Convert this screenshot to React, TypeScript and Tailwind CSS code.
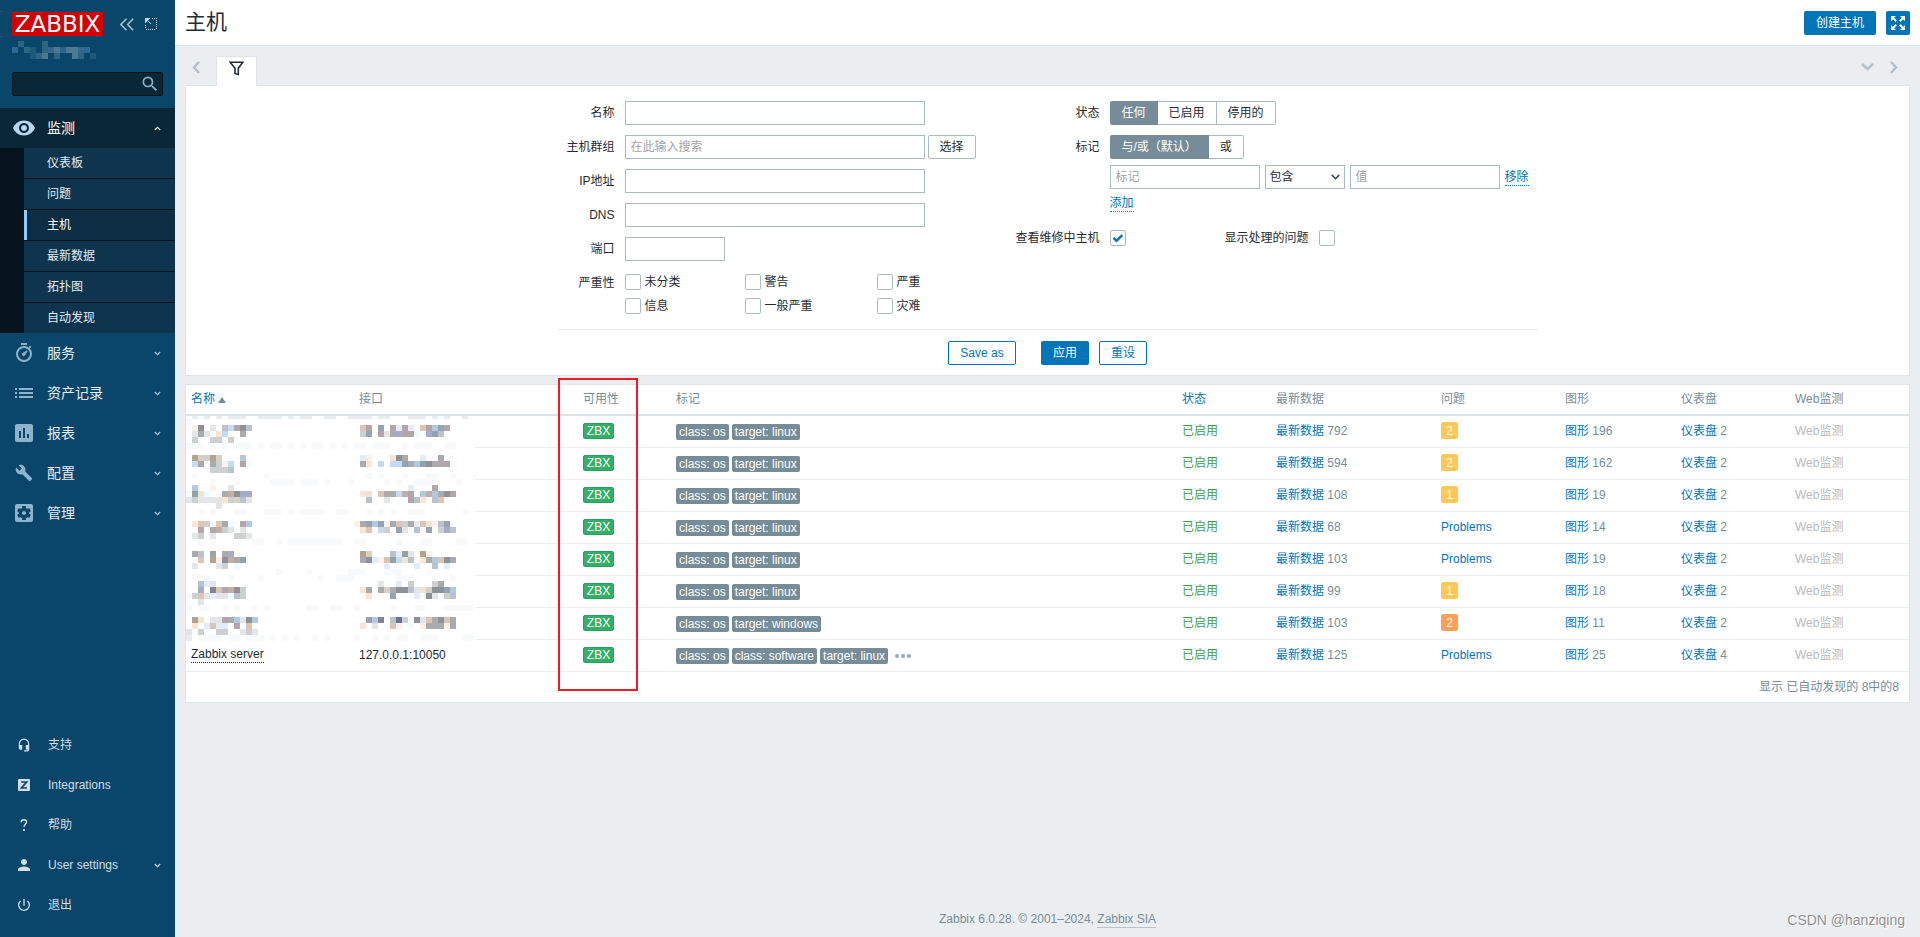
import { useState } from "react";
import type { ReactNode } from "react";
import {
  MdAssessment,
  MdBuild,
  MdHeadsetMic,
  MdPerson,
  MdPowerSettingsNew,
  MdRemoveRedEye,
  MdSearch,
  MdSettingsApplications,
} from "react-icons/md";

// @data: colours used by the pixelated (redacted) areas
const CELL = 6;
const palette: Record<string, string> = {
  f: "#f8f9fb",
  g: "#a9abae",
  d: "#8f9198",
  l: "#e4e5e6",
  s: "#cdd0d1",
  k: "#b5a28c",
  p: "#fcf1ea",
  o: "#fbe4d1",
  t: "#dbc6b6",
  r: "#b3a6aa",
  u: "#c5dbf4",
  v: "#bac2d0",
  i: "#a6abca",
  c: "#e3edf9",
  e: "#98a3b0",
  y: "#ece6d2",
  h: "#d5d1c4",
  m: "#8fa3a8",
  w: "#effcff",
  x: "#c4ada4",
  n: "#7c8793",
  q: "#b0cbe0",
  j: "#6c7099",
  z: "#e9ecef",
  "1": "#2b6a95",
  "2": "#2f6584",
  "3": "#1c5878",
  "4": "#4a7a8f",
  "5": "#37668f",
};

// [grid row, first column, cells]
type MosaicLine = [number, number, string];

const hostMosaic: MosaicLine[] = [
  [0, 1, "z.z.z.zzz..zzzz.z.zz..zz..zzzz.zz...zzz.z.z..z"],
  [1, 0, "f"],
  [2, 1, "pd.l.vurdv"],
  [3, 1, "lgl.ou..g"],
  [4, 1, "s..ss.s"],
  [5, 0, "fff.f.f.fff.f.ff.f.f.ff.f.f.ff.fff..f.fff..ff...f"],
  [7, 1, "khskh...q"],
  [8, 1, "ur.gspu.rw"],
  [9, 4, "sssv"],
  [10, 1, "f...........f................f.f...f...ff..f...f"],
  [11, 4, "f...f.....ffff.fff.f...f.....f.f..ffff...f"],
  [12, 1, "q..p..l"],
  [13, 0, "fmyw..gxdii"],
  [14, 0, "lslllloshvl"],
  [15, 5, "l"],
  [16, 2, "f.f...ff...fff.f.ffff..ff...f.f.f..fff......f"],
  [18, 1, "ots.tgw.rq"],
  [19, 2, "r.gxsl.l"],
  [20, 1, "ls.l...ssl"],
  [21, 2, "f.f......ff..f.fffffffff..ff.....f...ff....ff..f"],
  [23, 1, "gv.e.gi"],
  [24, 2, "t.kpdxrm"],
  [25, 1, "l...ls.w"],
  [26, 15, "f....f......fff...fff....f"],
  [27, 1, "fff...f....f.........f..fff.......fff...f..f"],
  [28, 2, "vcl"],
  [29, 2, "i.ntgxds"],
  [30, 0, "fstlcllwvs"],
  [31, 2, "l"],
  [32, 0, "f.ff..f.f..f.f......ff..ff..f.....f...ff...fffff"],
  [34, 1, "ky.llrgqldq"],
  [35, 1, "o.ctcc.r.t"],
  [36, 0, "l.s..ss..lsl"],
  [37, 0, "z.ffff.ff.fff.f.f.f..f.f....f..f.f.ff..fff....ff"],
  [2, 29, "tr.e.rcrc.trqer"],
  [3, 29, "se.rlgirrw.imv"],
  [7, 29, "cp...odg..c..g"],
  [8, 29, "go.u.uuegqmdgrrw"],
  [12, 29, "........c...g"],
  [13, 29, "oy.tgguxr.qxqgdr"],
  [14, 30, "v..l...rvo.vt"],
  [18, 28, "pgeqepgtsgctypve"],
  [19, 29, "ot.us.el.v.e.siv"],
  [23, 29, "kh...vcml.kp"],
  [24, 29, "gdcptmuyv.ogqtdg"],
  [25, 33, "c....c..v.c"],
  [28, 32, "l..c.s...sg"],
  [29, 29, "og.ghgddvlyhddeq"],
  [30, 30, "o...e...c.dl.sv"],
  [34, 30, "eqn.vjs.dltgdtg"],
  [35, 29, "o.l..tp.w.pgggpg"],
];

const userMosaic: MosaicLine[] = [
  [0, 1, "2...2"],
  [1, 0, "1.23.25424451"],
  [2, 3, "324.2..42.3"],
];

const Mosaic = ({ lines, width, height, top = 0, background = "none" }: {
  lines: MosaicLine[];
  width: number;
  height: number;
  top?: number;
  background?: string;
}) => (
  <svg
    width={width}
    height={height}
    viewBox={`0 ${top} ${width} ${height}`}
    shapeRendering="crispEdges"
    aria-hidden="true"
    className="block"
  >
    <rect y={top} width={width} height={height} fill={background} />
    {lines.map(([row, start, cells]) =>
      cells.split("").map((cell, i) =>
        cell === "." ? null : (
          <rect
            key={`${row}-${start}-${i}`}
            x={(start + i) * CELL}
            y={row * CELL}
            width={CELL}
            height={CELL}
            fill={palette[cell]}
          />
        )
      )
    )}
  </svg>
);

// @icons
const Chevron = ({ up = false }: { up?: boolean }) => (
  <svg width="7" height="5" viewBox="0 0 7 5" fill="none" stroke="currentColor" strokeWidth="1.2">
    <path d={up ? "M.8 4 3.5 1.3 6.2 4" : "M.8 1 3.5 3.7 6.2 1"} />
  </svg>
);

const StopwatchIcon = () => (
  <svg width="18" height="20" viewBox="0 0 18 20" fill="none" stroke="currentColor" strokeWidth="2">
    <path d="M6 1h6M14.3 4.6l1.4-1.4" />
    <circle cx="9" cy="11" r="7" />
    <path d="M12 8 9 11" strokeWidth="1.8" />
    <circle cx="8.7" cy="11.3" r="1.7" fill="currentColor" stroke="none" />
  </svg>
);

const ListIcon = () => (
  <svg width="18" height="12" viewBox="0 0 18 12" fill="currentColor" shapeRendering="crispEdges">
    <path d="M0 1h2v2H0zM4 1h14v2H4zM0 5h2v2H0zM4 5h14v2H4zM0 9h2v2H0zM4 9h14v2H4z" />
  </svg>
);

const QuestionIcon = () => (
  <svg width="8" height="12" viewBox="0 0 8 12" fill="none" stroke="currentColor" strokeWidth="1.4">
    <path d="M1.2 3.2C1.2 1.6 2.4.8 3.9.8s2.7.9 2.7 2.3C6.6 5 4 5.200 4 8" />
    <path d="M4 10v2" strokeWidth="1.7" />
  </svg>
);

const IntegrationsIcon = () => (
  <svg width="12" height="12" viewBox="0 0 12 12">
    <rect width="12" height="12" rx="1" fill="currentColor" />
    <path d="M3.2 3h5.4L3.4 9h5.5" fill="none" stroke="#0a466a" strokeWidth="1.7" />
  </svg>
);

const FilterIcon = () => (
  <svg width="15" height="15" viewBox="0 0 15 15" fill="none" stroke="#1f2c33" strokeWidth="1.6">
    <path d="M1.2 1.3h12.6L9.3 7.2v6.3l-3.3-1V7.2z" />
  </svg>
);

const ArrowIcon = ({ d, width, height }: { d: string; width: number; height: number }) => (
  <svg width={width} height={height} viewBox={`0 0 ${width} ${height}`} fill="none" stroke="#b4bfc6" strokeWidth="2.5">
    <path d={d} />
  </svg>
);

// @component: sidebar
const submenu = ["仪表板", "问题", "主机", "最新数据", "拓扑图", "自动发现"];

const menu: { label: string; icon: ReactNode }[] = [
  { label: "服务", icon: <StopwatchIcon /> },
  { label: "资产记录", icon: <ListIcon /> },
  { label: "报表", icon: <MdAssessment className="w-6 h-6" /> },
  { label: "配置", icon: <MdBuild className="w-[18px] h-[18px]" /> },
  { label: "管理", icon: <MdSettingsApplications className="w-6 h-6" /> },
];

const userMenu: { label: string; icon: ReactNode; expandable?: boolean }[] = [
  { label: "支持", icon: <MdHeadsetMic className="w-[14px] h-[14px]" /> },
  { label: "Integrations", icon: <IntegrationsIcon /> },
  { label: "帮助", icon: <QuestionIcon /> },
  { label: "User settings", icon: <MdPerson className="w-[18px] h-[18px]" />, expandable: true },
  { label: "退出", icon: <MdPowerSettingsNew className="w-4 h-4" /> },
];

const Sidebar = () => (
  <aside className="w-[175px] shrink-0 bg-[#0a466a] flex flex-col">
    <div className="p-3">
      <div className="flex items-center h-6">
        <a
          href="#"
          className="w-[91px] h-6 bg-[#d40000] text-white text-[23px] leading-6 text-center font-['DejaVu_Sans',sans-serif]"
        >
          ZABBIX
        </a>
        <button className="ml-[17px] text-[#a9c2d2]" aria-label="Collapse sidebar">
          <svg width="14" height="13" viewBox="0 0 14 13" fill="none" stroke="currentColor" strokeWidth="1.5">
            <path d="M6.500.7.9 6.500l5.600 5.800M13.200.7 7.600 6.500l5.600 5.800" />
          </svg>
        </button>
        <button className="ml-[11px] text-[#c3d5e0]" aria-label="Hide sidebar">
          <svg width="12" height="12" viewBox="0 0 12 12" fill="currentColor" shapeRendering="crispEdges">
            <path d="M0 0h5v1H4v1H3v1h1v1h1v1h1v1H5V5H4V4H3V3H2v1H1v1H0z" />
            <path d="M7 .5h5M11.500 2v10M10 11.500H0M.5 10V6" fill="none" stroke="currentColor" strokeDasharray="1 1" />
          </svg>
        </button>
      </div>
      <div className="mt-[5px] h-[18px]">
        <Mosaic lines={userMosaic} width={84} height={18} />
      </div>
      <div className="mt-[13px] flex items-center h-6 bg-[#0a2737] border border-[#05141c] rounded-xs">
        <input type="text" aria-label="Search" className="min-w-0 flex-1 h-full px-1 bg-transparent text-white outline-none" />
        <button className="pr-[2px] text-[#8fb0c4]" aria-label="Search">
          <MdSearch className="w-5 h-5" />
        </button>
      </div>
    </div>

    <nav className="text-sm leading-5 text-[#e3edf4]">
      <a href="#" className="flex items-center h-10 pl-3 pr-[14px] gap-[11px] bg-[#0a2737] text-white">
        <span className="w-6 flex justify-center text-[#b9d6ee]">
          <MdRemoveRedEye className="w-6 h-6" />
        </span>
        <span className="flex-1">监测</span>
        <Chevron up />
      </a>
      <ul className="pl-6 bg-[#05141c] text-xs flex flex-col gap-px">
        {submenu.map((label) => (
          <li key={label}>
            <a
              href="#"
              className={
                label === "主机"
                  ? "flex items-center h-[30px] pl-5 border-l-[3px] border-[#8ccdff] bg-[#0d2d42] text-white"
                  : "flex items-center h-[30px] pl-5 border-l-[3px] border-[#0f344d] bg-[#0f344d]"
              }
            >
              {label}
            </a>
          </li>
        ))}
      </ul>
      {menu.map(({ label, icon }) => (
        <a key={label} href="#" className="flex items-center h-10 pl-3 pr-[14px] gap-[11px]">
          <span className="w-6 flex justify-center text-[#8fb3cc]">{icon}</span>
          <span className="flex-1">{label}</span>
          <span className="text-[#a9c2d2]">
            <Chevron />
          </span>
        </a>
      ))}
    </nav>

    <nav className="mt-auto pb-3 text-xs text-[#cfdee8]">
      {userMenu.map(({ label, icon, expandable }) => (
        <a key={label} href="#" className="flex items-center h-10 pl-3 pr-[14px] gap-3">
          <span className="w-6 flex justify-center">{icon}</span>
          <span className="flex-1">{label}</span>
          {expandable && <Chevron />}
        </a>
      ))}
    </nav>
  </aside>
);

// @component: form controls
const Checkbox = ({ id, defaultChecked }: { id: string; defaultChecked?: boolean }) => (
  <span className="relative inline-flex w-4 h-4 shrink-0">
    <input
      id={id}
      type="checkbox"
      defaultChecked={defaultChecked}
      className="peer appearance-none w-4 h-4 border border-[#acbbc2] rounded-xs bg-white"
    />
    <svg
      viewBox="0 0 16 16"
      className="absolute inset-0 pointer-events-none opacity-0 peer-checked:opacity-100"
      fill="none"
      stroke="#0275b8"
      strokeWidth="2.5"
    >
      <path d="m3.500 7.800 3 3 5.700-5.700" />
    </svg>
  </span>
);

const Segmented = ({ name, options }: { name: string; options: string[] }) => {
  const [value, setValue] = useState(options[0]);

  return (
    <div role="radiogroup" aria-label={name} className="flex h-6">
      {options.map((option) => (
        <label
          key={option}
          className={
            option === value
              ? "relative flex items-center px-3 bg-[#768d99] text-white first:rounded-l-xs last:rounded-r-xs"
              : "relative flex items-center px-[11px] bg-white border border-l-0 border-[#acbbc2] first:rounded-l-xs first:border-l last:rounded-r-xs"
          }
        >
          <input
            type="radio"
            name={name}
            checked={option === value}
            onChange={() => setValue(option)}
            className="sr-only"
          />
          {option}
        </label>
      ))}
    </div>
  );
};

const inputClass =
  "h-6 px-[5px] bg-white border border-[#acbbc2] outline-none placeholder:text-[#a0a4a6]";

const severities = ["未分类", "警告", "严重", "信息", "一般严重", "灾难"];

// @component: filter
const Filter = () => (
  <form onSubmit={(e) => e.preventDefault()} className="bg-white border border-[#dfe4e7] pt-[15px] pb-[10px]">
    <div className="w-[982px] max-w-full mx-auto">
      <div className="flex pb-3 border-b border-[#ebeef0]">
        <div className="w-[432px] grid grid-cols-[58px_1fr] gap-[10px] content-start items-center">
          <label htmlFor="name" className="text-right">名称</label>
          <input id="name" type="text" className={`${inputClass} w-[300px]`} />

          <label htmlFor="groups" className="text-right">主机群组</label>
          <div className="flex gap-[3px]">
            <input id="groups" type="text" placeholder="在此输入搜索" className={`${inputClass} w-[300px] shrink-0`} />
            <button className="w-12 h-6 shrink-0 border border-[#acbbc2] rounded-xs">选择</button>
          </div>

          <label htmlFor="ip" className="text-right">IP地址</label>
          <input id="ip" type="text" className={`${inputClass} w-[300px]`} />

          <label htmlFor="dns" className="text-right">DNS</label>
          <input id="dns" type="text" className={`${inputClass} w-[300px]`} />

          <label htmlFor="port" className="text-right">端口</label>
          <input id="port" type="text" className={`${inputClass} w-[100px]`} />

          <span className="text-right self-start leading-6">严重性</span>
          <div className="grid grid-cols-[120px_132px_auto] gap-y-[2px]">
            {severities.map((label, i) => (
              <div key={label} className="flex items-center gap-1 h-[22px] leading-6">
                <Checkbox id={`severity-${i}`} />
                <label htmlFor={`severity-${i}`}>{label}</label>
              </div>
            ))}
          </div>
        </div>

        <div className="flex-1 grid grid-cols-[111px_1fr] gap-[10px] content-start">
          <span className="text-right leading-6">状态</span>
          <Segmented name="状态" options={["任何", "已启用", "停用的"]} />

          <span className="text-right leading-6">标记</span>
          <div>
            <Segmented name="标记" options={["与/或（默认）", "或"]} />
            <div className="flex items-center mt-[6px] gap-[5px] whitespace-nowrap">
              <input type="text" aria-label="标记" placeholder="标记" className={`${inputClass} w-[150px]`} />
              <span className="relative flex items-center">
                <select
                  aria-label="运算符"
                  className="appearance-none w-20 h-6 pl-1 bg-white border border-[#acbbc2] outline-none"
                >
                  <option>包含</option>
                  <option>等于</option>
                </select>
                <svg
                  width="9"
                  height="6"
                  viewBox="0 0 9 6"
                  fill="none"
                  stroke="#3c4a52"
                  strokeWidth="1.5"
                  className="absolute right-[5px] pointer-events-none"
                >
                  <path d="M.7.9 4.500 4.700 8.300.9" />
                </svg>
              </span>
              <input type="text" aria-label="值" placeholder="值" className={`${inputClass} w-[150px]`} />
              <button className="leading-4 text-[#0275b8] border-b border-dotted border-[#0275b8]">移除</button>
            </div>
            <button className="mt-[6px] leading-4 text-[#0275b8] border-b border-dotted border-[#0275b8]">添加</button>
          </div>

          <label htmlFor="maintenance" className="mt-2 text-right leading-4">查看维修中主机</label>
          <div className="mt-2 flex items-center">
            <Checkbox id="maintenance" defaultChecked />
            <label htmlFor="suppressed" className="ml-[99px] mr-[10px] leading-4">显示处理的问题</label>
            <Checkbox id="suppressed" />
          </div>
        </div>
      </div>

      <div className="flex justify-center pt-[11px]">
        <button className="w-[68px] h-6 border border-[#0275b8] rounded-xs text-[#0275b8]">Save as</button>
        <button className="w-12 h-6 ml-[25px] bg-[#0275b8] rounded-xs text-white">应用</button>
        <button className="w-12 h-6 ml-[10px] border border-[#0275b8] rounded-xs text-[#0275b8]">重设</button>
      </div>
    </div>
  </form>
);

// @component: hosts table
interface Host {
  name?: string;
  iface?: string;
  tags: string[];
  latest: number;
  problems?: number;
  high?: boolean;
  graphs: number;
  dashboards: number;
}

const linux = ["class: os", "target: linux"];

const hosts: Host[] = [
  { tags: linux, latest: 792, problems: 2, graphs: 196, dashboards: 2 },
  { tags: linux, latest: 594, problems: 2, graphs: 162, dashboards: 2 },
  { tags: linux, latest: 108, problems: 1, graphs: 19, dashboards: 2 },
  { tags: linux, latest: 68, graphs: 14, dashboards: 2 },
  { tags: linux, latest: 103, graphs: 19, dashboards: 2 },
  { tags: linux, latest: 99, problems: 1, graphs: 18, dashboards: 2 },
  { tags: ["class: os", "target: windows"], latest: 103, problems: 2, high: true, graphs: 11, dashboards: 2 },
  {
    name: "Zabbix server",
    iface: "127.0.0.1:10050",
    tags: ["class: os", "class: software", "target: linux"],
    latest: 125,
    graphs: 25,
    dashboards: 4,
  },
];

const thClass = "h-[31px] px-[5px] pb-[2px] border-b-2 border-[#dce2e5] font-normal text-left";
const tdClass = "h-8 px-[5px] pb-[2px] border-b border-[#ebeef0] text-[#768d99]";

const HostsTable = () => (
  <div className="relative mt-2 bg-white border border-[#dfe4e7]">
    <table className="w-full table-fixed border-separate border-spacing-0 whitespace-nowrap">
      <thead className="text-[#768d99]">
        <tr>
          <th className={`${thClass} w-[168px]`}>
            <a href="#" className="inline-flex items-center gap-[3px] text-[#0275b8]">
              名称
              <svg width="8" height="6" viewBox="0 0 8 6" className="mt-[3px]">
                <path d="M4 0 8 6H0z" fill="#768d99" />
              </svg>
            </a>
          </th>
          <th className={`${thClass} w-[224px]`}>接口</th>
          <th className={`${thClass} w-[93px]`}>可用性</th>
          <th className={thClass}>标记</th>
          <th className={`${thClass} w-[94px]`}>
            <a href="#" className="text-[#0275b8]">状态</a>
          </th>
          <th className={`${thClass} w-[165px]`}>最新数据</th>
          <th className={`${thClass} w-[124px]`}>问题</th>
          <th className={`${thClass} w-[116px]`}>图形</th>
          <th className={`${thClass} w-[114px]`}>仪表盘</th>
          <th className={`${thClass} w-[119px]`}>Web监测</th>
        </tr>
      </thead>
      <tbody>
        {hosts.map((host, i) => (
          <tr key={i}>
            <td className={tdClass}>
              {host.name && (
                <a href="#" className="inline-block leading-4 text-[#1f2c33] border-b border-dotted border-[#1f2c33]">
                  {host.name}
                </a>
              )}
            </td>
            <td className={tdClass}>
              <span className="text-[#1f2c33]">{host.iface}</span>
            </td>
            <td className={tdClass}>
              <span className="flex w-[31px] h-4 items-center justify-center bg-[#34af67] border border-[#2f9f5e] rounded-xs text-white">
                ZBX
              </span>
            </td>
            <td className={tdClass}>
              <div className="flex items-center gap-[3px] pt-[2px]">
                {host.tags.map((tag) => (
                  <span key={tag} className="h-4 px-[3px] leading-4 bg-[#768d99] rounded-xs text-white">
                    {tag}
                  </span>
                ))}
                {host.tags.length > 2 && (
                  <button className="ml-1" aria-label="More tags">
                    <svg width="16" height="4" viewBox="0 0 16 4" fill="#97aab3">
                      <circle cx="2" cy="2" r="2" />
                      <circle cx="8" cy="2" r="2" />
                      <circle cx="14" cy="2" r="2" />
                    </svg>
                  </button>
                )}
              </div>
            </td>
            <td className={tdClass}>
              <a href="#" className="text-[#429e47]">已启用</a>
            </td>
            <td className={tdClass}>
              <a href="#" className="text-[#0275b8]">最新数据</a> {host.latest}
            </td>
            <td className={tdClass}>
              {host.problems ? (
                <a
                  href="#"
                  className={
                    host.high
                      ? "flex w-[17px] h-[17px] items-center justify-center rounded-xs text-white bg-[#ffa059]"
                      : "flex w-[17px] h-[17px] items-center justify-center rounded-xs text-white bg-[#ffc859]"
                  }
                >
                  {host.problems}
                </a>
              ) : (
                <a href="#" className="text-[#0275b8]">Problems</a>
              )}
            </td>
            <td className={tdClass}>
              <a href="#" className="text-[#0275b8]">图形</a> {host.graphs}
            </td>
            <td className={tdClass}>
              <a href="#" className="text-[#0275b8]">仪表盘</a> {host.dashboards}
            </td>
            <td className={tdClass}>
              <span className="text-[#b8babb]">Web监测</span>
            </td>
          </tr>
        ))}
      </tbody>
    </table>
    <div className="h-[30px] px-[10px] leading-[30px] text-right text-[#768d99]">显示 已自动发现的 8中的8</div>

    {/* redacted names and interfaces */}
    <div className="absolute left-0 top-[31px]">
      <Mosaic lines={hostMosaic} width={290} height={225} top={3} background="#ffffff" />
    </div>
    {/* highlight around the availability column */}
    <div className="absolute left-[372px] -top-[7px] w-20 h-[313px] border-2 border-[#ed1c24] pointer-events-none" />
  </div>
);

export default function App() {
  return (
    <div className="flex min-h-screen bg-[#ebeef0] text-xs text-[#1f2c33] font-['Liberation_Sans','Noto_Sans_CJK_SC',sans-serif]">
      <Sidebar />
      <div className="relative flex-1 min-w-0 flex flex-col">
        <header className="flex items-center h-[46px] px-[10px] bg-white border-b border-[#dfe4e7]">
          <h1 className="pb-[2px] text-[21px] leading-6">主机</h1>
          <button className="ml-auto w-[72px] h-6 bg-[#0275b8] rounded-xs text-white">创建主机</button>
          <button className="ml-[10px] w-6 h-6 flex items-center justify-center bg-[#0275b8] rounded-xs text-white" aria-label="Kiosk mode">
            <svg width="14" height="14" viewBox="0 0 14 14" fill="none" stroke="currentColor" strokeWidth="2">
              <path d="M1.500 1.500 5.200 5.200M12.500 1.500 8.800 5.200M1.500 12.500l3.700-3.700M12.500 12.500 8.800 8.800" />
              <path d="M0 0h5L0 5zM14 0v5L9 0zM0 14V9l5 5zM14 14H9l5-5z" fill="currentColor" stroke="none" />
            </svg>
          </button>
        </header>

        <main className="px-[10px]">
          <div className="flex items-end h-[39px]">
            <button className="w-[31px] h-9 pl-[7px] flex items-center" aria-label="Previous filter">
              <ArrowIcon d="M7 1 2 6.500 7 12" width={8} height={13} />
            </button>
            <button className="relative w-[41px] h-[30px] -mb-px pb-[6px] flex items-center justify-center bg-white border border-b-0 border-[#dfe4e7]" aria-label="Filter">
              <FilterIcon />
            </button>
            <div className="ml-auto h-9 pr-3 flex items-center gap-4">
              <button aria-label="Filter list">
                <ArrowIcon d="M1 1l5.500 5L12 1" width={13} height={8} />
              </button>
              <button aria-label="Next filter">
                <ArrowIcon d="M1 1l5 5.500L1 12" width={8} height={13} />
              </button>
            </div>
          </div>
          <Filter />
          <HostsTable />
        </main>

        <footer className="mt-auto pb-[9px] text-center leading-4 text-[#768d99]">
          Zabbix 6.0.28. © 2001–2024,{" "}
          <a href="#" className="inline-block border-b border-[#b8c4ca]">Zabbix SIA</a>
        </footer>
        <span className="absolute right-[15px] bottom-[7px] text-sm leading-5 text-[#909294] [text-shadow:1px_1px_0_#ffffff]">
          CSDN @hanziqing
        </span>
      </div>
    </div>
  );
}
